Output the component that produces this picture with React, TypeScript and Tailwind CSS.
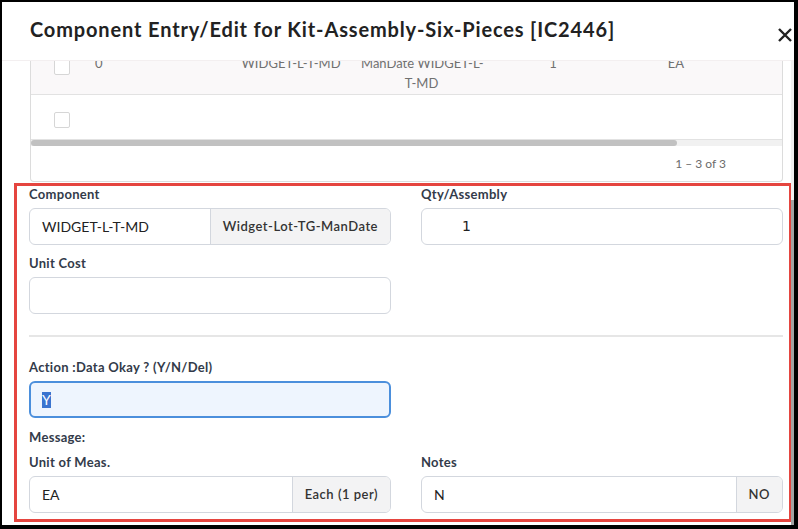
const LABEL = "block text-[13px] font-bold leading-[16px] tracking-[0.3px] text-[#333b4a]";
const BOX = "flex h-[37px] items-stretch overflow-hidden rounded-[6px] border border-[#d3d7de] bg-white text-[14px] text-[#222]";
const ADDON = "flex items-center border-l border-[#d3d7de] bg-[#f3f3f4] px-[12px] text-[13px] font-semibold tracking-[0.5px] text-[#333]";

function Checkbox({ top }: { top: string }) {
  return <span className={`ml-[23px] block h-[16px] w-[16px] rounded-[2px] border border-[#d6d6d6] bg-white ${top}`} />;
}

function Field({ label, children }: { label: string; children: React.ReactNode }) {
  return (
    <div>
      <label className={`${LABEL} mb-[6px]`}>{label}</label>
      {children}
    </div>
  );
}

export default function App() {
  return (
    <div className="h-[529px] w-[798px] bg-black pb-[4px] pl-[2px] pr-[4px] pt-[2px] font-['Lato',sans-serif]">
      <div className="flex h-full flex-col bg-white">
        {/* Modal header */}
        <div className="flex h-[59px] shrink-0 items-start border-b border-[#f3eff0] pl-[28px] pr-[2px]">
          <h1 className="whitespace-nowrap pt-[15px] text-[20px] font-bold leading-[24px] tracking-[0.85px] text-[#222]">
            Component Entry/Edit for Kit-Assembly-Six-Pieces [IC2446]
          </h1>
          <svg viewBox="0 0 14 14" className="ml-auto mt-[26px] h-[14px] w-[14px] text-[#222]" fill="none" stroke="currentColor" strokeWidth={2.4}>
            <path d="M1 1L13 13M13 1L1 13" />
          </svg>
        </div>

        {/* Scrolled body */}
        <div className="flex min-h-0 flex-1 overflow-hidden">
          <div className="min-w-0 flex-1 pl-[28px] pr-[8px]">
            <div className="-mt-[16px]">
              {/* Components grid */}
              <div className="rounded-b-[4px] border-x border-b border-[#dcdcdc] text-[13px] leading-[20px] text-[#707070]">
                <div className="flex h-[50px] items-start whitespace-nowrap border-b border-[#e2e2e2] bg-[#faf8f9] pt-[8px]">
                  <div className="w-[50px] shrink-0">
                    <Checkbox top="mt-[6px]" />
                  </div>
                  <div className="w-[140px] shrink-0 pl-[14px]">0</div>
                  <div className="w-[140px] shrink-0 text-center">WIDGET-L-T-MD</div>
                  <div className="w-[121px] shrink-0 text-center">
                    ManDate WIDGET-L-
                    <br />
                    T-MD
                  </div>
                  <div className="w-[142px] shrink-0 text-center">1</div>
                  <div className="w-[104px] shrink-0 text-center">EA</div>
                </div>
                <div className="flex h-[45px] items-start border-b border-[#e2e2e2]">
                  <div className="w-[50px] shrink-0">
                    <Checkbox top="mt-[17px]" />
                  </div>
                </div>
                <div className="h-[6px] bg-[#f1f1f1]">
                  <div className="h-full w-[646px] rounded-full bg-[#c1c1c1]" />
                </div>
                <div className="flex h-[35px] items-center justify-end pr-[56px] text-[12px] text-[#6b6b6b]">
                  1 – 3 of 3
                </div>
              </div>

              {/* Entry form (highlighted) */}
              <div className="-ml-[16px] -mr-[9px] mt-[1px] border-[3px] border-[#e5453f] pb-[6px] pl-[12px] pr-[6px]">
                <div className="grid grid-cols-2 gap-x-[30px]">
                  <Field label="Component">
                    <div className={BOX}>
                      <span className="flex flex-1 items-center pl-[12px]">WIDGET-L-T-MD</span>
                      <span className={ADDON}>Widget-Lot-TG-ManDate</span>
                    </div>
                  </Field>
                  <Field label="Qty/Assembly">
                    <div className={BOX}>
                      <span className="flex flex-1 items-center pl-[40px] font-['DejaVu_Sans',sans-serif] text-[14px]">1</span>
                    </div>
                  </Field>
                  <div className="mt-[10px]">
                    <Field label="Unit Cost">
                      <div className={BOX} />
                    </Field>
                  </div>
                </div>

                <div className="mt-[21px] h-[2px] bg-[#e6e6e6]" />

                <div className="mt-[22px] grid grid-cols-2 gap-x-[30px]">
                  <Field label="Action :Data Okay ? (Y/N/Del)">
                    <div className="flex h-[37px] items-center rounded-[6px] border-2 border-[#4b8fdc] bg-[#eef5fe] pl-[11px] text-[14px] text-[#222]">
                      <span className="bg-[#3a74cf] leading-[16px] text-white">Y</span>
                    </div>
                  </Field>
                </div>

                <p className={`${LABEL} mt-[11px]`}>Message:</p>

                <div className="mt-[9px] grid grid-cols-2 gap-x-[30px]">
                  <Field label="Unit of Meas.">
                    <div className={BOX}>
                      <span className="flex flex-1 items-center pl-[12px]">EA</span>
                      <span className={ADDON}>Each (1 per)</span>
                    </div>
                  </Field>
                  <Field label="Notes">
                    <div className={BOX}>
                      <span className="flex flex-1 items-center pl-[12px]">N</span>
                      <span className={ADDON}>NO</span>
                    </div>
                  </Field>
                </div>
              </div>
            </div>
          </div>

          {/* Vertical scrollbar */}
          <div className="flex w-[3px] shrink-0 flex-col bg-[#f0f0f0]">
            <div className="mt-[139px] flex-1 bg-[#a3a3a3]" />
          </div>
        </div>
      </div>
    </div>
  );
}
